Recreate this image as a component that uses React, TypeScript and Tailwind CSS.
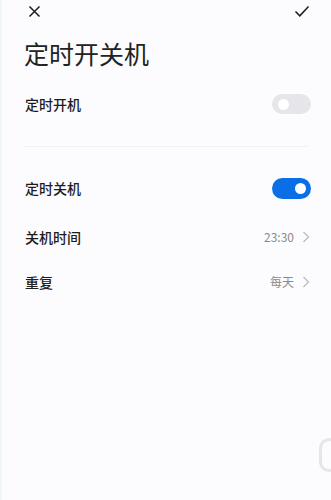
import React from 'react';

function Toggle({ on }: { on: boolean }) {
  return (
    <div
      className={
        on
          ? 'flex h-[21px] w-[39px] items-center justify-end rounded-full bg-[#0a6ee6] pr-[5px]'
          : 'flex h-[20px] w-[39px] items-center justify-start rounded-full bg-[#e6e5ea] pl-[6px]'
      }
    >
      <div className="h-[11px] w-[11px] rounded-full bg-white" />
    </div>
  );
}

function Chevron() {
  return (
    <svg width="8" height="12" viewBox="0 0 8 12" fill="none" className="ml-[8px]">
      <path d="M1.5 1 L6.5 6 L1.5 11" stroke="#b9b9be" strokeWidth="1.2" />
    </svg>
  );
}

export default function App() {
  return (
    <div
      className="relative flex h-[500px] w-[331px] flex-col overflow-hidden border-l-2 border-[#eef6f9] bg-[#fcfbfd] text-[#1d1d1f]"
      style={{ fontFamily: '"Noto Sans CJK SC", "Noto Sans", sans-serif' }}
    >
      {/* Top bar */}
      <div className="flex h-[22px] items-center justify-between pl-[26px] pr-[21px]">
        <svg width="13" height="13" viewBox="0 0 13 13" fill="none">
          <path d="M1.5 1.5 L11.5 11.5 M11.5 1.5 L1.5 11.5" stroke="#1d1d1f" strokeWidth="1.5" />
        </svg>
        <svg width="16" height="13" viewBox="0 0 16 13" fill="none">
          <path d="M1.5 6.5 L5.8 10.8 L14.5 1.5" stroke="#1d1d1f" strokeWidth="1.5" />
        </svg>
      </div>

      {/* Title */}
      <div className="mt-[14px] pl-[22px] text-[25px] leading-[34px] font-normal text-[#222]">定时开关机</div>

      {/* 定时开机 */}
      <div className="mt-[12px] flex h-[44px] items-center justify-between pl-[23px] pr-[20px]">
        <span className="text-[14px] font-medium">定时开机</span>
        <Toggle on={false} />
      </div>

      <div className="mx-[23px] mt-[20px] h-px bg-[#f1f1f3]" />

      {/* 定时关机 */}
      <div className="mt-[19px] flex h-[44px] items-center justify-between pl-[23px] pr-[20px]">
        <span className="text-[14px] font-medium">定时关机</span>
        <Toggle on />
      </div>

      <div className="mt-[5px] flex h-[44px] items-center justify-between pl-[23px] pr-[21px]">
        <span className="text-[14px] font-medium">关机时间</span>
        <span className="flex items-center text-[12px] text-[#8a8a8f]">
          23:30
          <Chevron />
        </span>
      </div>

      <div className="mt-[1px] flex h-[44px] items-center justify-between pl-[23px] pr-[21px]">
        <span className="text-[14px] font-medium">重复</span>
        <span className="flex items-center text-[12px] text-[#8a8a8f]">
          每天
          <Chevron />
        </span>
      </div>

      {/* edge gesture arc */}
      <div className="absolute left-[317px] top-[438px] h-[34px] w-[20px] rounded-full border-[3px] border-[#e6e6e8]" />
    </div>
  );
}
